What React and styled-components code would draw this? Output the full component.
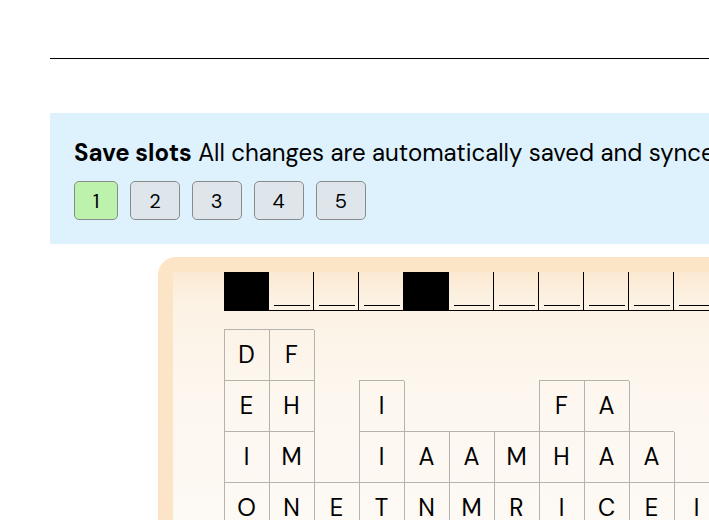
import React from "react";
import styled, { createGlobalStyle } from "styled-components";

const Global = createGlobalStyle`
  html, body { margin: 0; padding: 0; overflow: hidden; background: #ffffff; }
  body { font-family: "DM Sans", "Lato", "Noto Sans", sans-serif; color: #000; }
`;

const Page = styled.div`
  width: 1200px;
  padding: 58px 0 0 50px;
`;

const Rule = styled.hr`
  margin: 0;
  border: 0;
  border-top: 1px solid #000;
  height: 0;
`;

const SavePanel = styled.section`
  margin-top: 54px;
  background: #ddf2fd;
  padding: 24px;
`;

const PanelText = styled.p`
  margin: 0;
  font-size: 24px;
  line-height: 32px;
  white-space: nowrap;
  b { font-weight: 700; }
`;

const SlotRow = styled.div`
  display: flex;
  gap: 12px;
  margin-top: 12px;
`;

const SlotButton = styled.button`
  font-family: inherit;
  font-size: 20px;
  height: 39px;
  padding: 0 18px;
  border: 1px solid #8a8a8a;
  border-radius: 5px;
  background: ${(p) => (p.$active ? "#bdf2ad" : "#dfe6eb")};
  color: #000;
`;

const Card = styled.div`
  margin: 13px 0 0 108px;
  width: 900px;
  border: 15px solid #fce5c6;
  border-bottom: 0;
  border-radius: 18px 18px 0 0;
  background: linear-gradient(#fbe9d2 0px, #fcf2e4 30px, #fdf7ef 120px, #fdf9f4 260px);
  padding: 0 0 40px 51px;
`;

const AnswerRow = styled.div`
  display: flex;
  box-sizing: border-box;
  height: 39px;
  border-bottom: 1px solid #000;
  width: max-content;
`;

const AnswerCell = styled.div`
  width: 45px;
  box-sizing: border-box;
  display: flex;
  align-items: flex-end;
  justify-content: center;
  padding-bottom: 4px;
  background: ${(p) => (p.$black ? "#000" : "transparent")};
  border-right: ${(p) => (p.$black ? "0" : "1px solid #000")};
`;

const Blank = styled.span`
  display: block;
  width: 36px;
  border-bottom: 1px solid #000;
  margin-right: -1px;
`;

const LetterGrid = styled.div`
  margin-top: 18px;
  display: grid;
  grid-template-columns: repeat(14, 45px);
  grid-auto-rows: 51px;
`;

const Letter = styled.div`
  display: flex;
  align-items: center;
  justify-content: center;
  font-size: 24px;
  box-shadow: ${(p) =>
    p.$ch ? "inset 1px 1px 0 #b5b3b0, 1px 1px 0 #b5b3b0" : "none"};
`;

const answer = [1, 0, 0, 0, 1, 0, 0, 0, 0, 0, 0, 0, 0, 1];

const grid = [
  "DF            ",
  "EH I   FA     ",
  "IM IAAMHAA    ",
  "ONETNMRICEIAST",
];

export default function App() {
  return (
    <Page>
      <Global />
      <Rule />
      <SavePanel>
        <PanelText>
          <b>Save slots</b> All changes are automatically saved and synced across devices.
        </PanelText>
        <SlotRow>
          {[1, 2, 3, 4, 5].map((n) => (
            <SlotButton key={n} $active={n === 1}>
              {n}
            </SlotButton>
          ))}
        </SlotRow>
      </SavePanel>
      <Card>
        <AnswerRow>
          {answer.map((b, i) => (
            <AnswerCell key={i} $black={b}>
              {!b && <Blank />}
            </AnswerCell>
          ))}
        </AnswerRow>
        <LetterGrid>
          {grid.map((row, r) =>
            row.split("").map((ch, c) => (
              <Letter key={`${r}-${c}`} $ch={ch !== " "}>
                {ch !== " " ? ch : ""}
              </Letter>
            ))
          )}
        </LetterGrid>
      </Card>
    </Page>
  );
}
